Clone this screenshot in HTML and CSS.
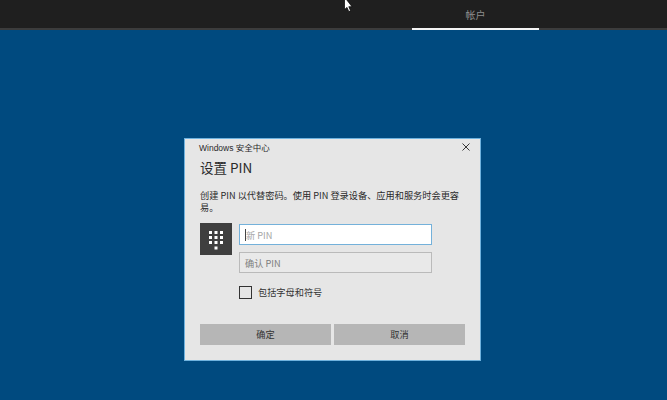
FILE: index.html
```html
<!DOCTYPE html>
<html lang="zh-CN">
<head>
<meta charset="utf-8">
<title>设置 PIN</title>
<link rel="stylesheet" href="styles.css">
</head>
<body>
<header class="topbar">
  <svg class="cursor" width="10" height="14" viewBox="0 0 10 14"><path d="M.5-3V9.5L3 7.4 4.8 11.6 6.6 10.8 4.8 6.7H8Z" fill="#fff" stroke="#000" stroke-width=".7"/></svg>
  <div class="tab">帐户</div>
</header>
<main class="desk">
  <section class="dialog">
    <div class="titlebar">
      <span class="app">Windows 安全中心</span>
      <svg class="close" width="8" height="8" viewBox="0 0 8 8"><path d="M.5.5l7 7M7.5.5l-7 7" stroke="#222" stroke-width=".9" fill="none"/></svg>
    </div>
    <h1 class="heading">设置 PIN</h1>
    <p class="desc">创建 PIN 以代替密码。使用 PIN 登录设备、应用和服务时会更容易。</p>
    <div class="form">
      <div class="keypad">
        <svg width="14" height="19" viewBox="0 0 14 19" fill="#fff">
          <rect x="0" y="0" width="3" height="3"/><rect x="5.5" y="0" width="3" height="3"/><rect x="11" y="0" width="3" height="3"/>
          <rect x="0" y="5" width="3" height="3"/><rect x="5.5" y="5" width="3" height="3"/><rect x="11" y="5" width="3" height="3"/>
          <rect x="0" y="10" width="3" height="3"/><rect x="5.5" y="10" width="3" height="3"/><rect x="11" y="10" width="3" height="3"/>
          <rect x="5.5" y="15.5" width="3" height="3"/>
        </svg>
      </div>
      <div class="fields">
        <div class="field active"><span class="caret"></span><span>新 PIN</span></div>
        <div class="field muted"><span>确认 PIN</span></div>
        <label class="check"><span class="box"></span><span>包括字母和符号</span></label>
      </div>
    </div>
    <div class="actions">
      <div class="btn">确定</div>
      <div class="btn">取消</div>
    </div>
  </section>
</main>
</body>
</html>
```
FILE: styles.css
```css
* { box-sizing: border-box; }
html, body { margin: 0; height: 100%; }
body {
  width: 667px;
  height: 400px;
  overflow: hidden;
  display: flex;
  flex-direction: column;
  font-family: "Noto Sans CJK SC", "Liberation Sans", sans-serif;
  background: #004a7f;
}
.topbar {
  position: relative;
  height: 30px;
  flex: none;
  background: #1f1f1f;
  border-bottom: 2px solid #3c3c3c;
  padding-left: 412px;
}
.cursor { position: absolute; left: 344px; top: 0; }
.tab {
  width: 127px;
  height: 30px;
  padding-top: 8px;
  border-bottom: 2px solid #f4f4f4;
  text-align: center;
  font-size: 10px;
  line-height: 14px;
  color: #8f8f8f;
}
.desk { flex: 1; padding: 108px 0 0 184px; }
.dialog {
  width: 297px;
  height: 223px;
  background: #e6e6e6;
  border: 1px solid #6fb2de;
  padding: 0 15px;
  color: #2a2a2a;
}
.titlebar {
  display: flex;
  justify-content: space-between;
  align-items: center;
  height: 16px;
  margin: 0 -5px 0 -1px;
  font-size: 8.5px;
}
.app { font-family: "Liberation Sans", "Noto Sans CJK SC", sans-serif; }
.heading {
  margin: 2px 0 0;
  font-size: 13.5px;
  line-height: 20px;
  font-weight: 400;
}
.desc {
  margin: 12px 0 0;
  font-size: 9.2px;
  line-height: 12px;
  width: 266px;
}
.form { display: flex; gap: 7px; margin-top: 10px; }
.keypad {
  width: 32px;
  height: 32px;
  flex: none;
  background: #3f3f3f;
  display: flex;
  align-items: flex-start;
  justify-content: center;
  padding-top: 8px;
}
.fields { display: flex; flex-direction: column; width: 193px; margin-top: 1px; }
.field {
  height: 21px;
  display: flex;
  align-items: center;
  padding-left: 5px;
  font-size: 9.2px;
  color: #a5a5a5;
  border: 1.5px solid #b4b4b4;
}
.field.active { background: #fff; border-color: #74b1da; }
.caret { width: 1px; height: 12px; background: #444; }
.field.muted { background: #e9e9e9; margin-top: 7px; color: #7d7d7d; border-color: #bababa; }
.check {
  display: flex;
  align-items: center;
  gap: 6px;
  margin-top: 12px;
  font-size: 9.2px;
  color: #333;
}
.box { width: 13px; height: 13px; flex: none; border: 1.5px solid #333; }
.actions { display: flex; gap: 3px; margin-top: 25px; width: 265px; }
.btn {
  flex: 1;
  height: 21px;
  background: #b6b6b6;
  text-align: center;
  font-size: 9.2px;
  line-height: 21px;
  color: #333;
}
```
